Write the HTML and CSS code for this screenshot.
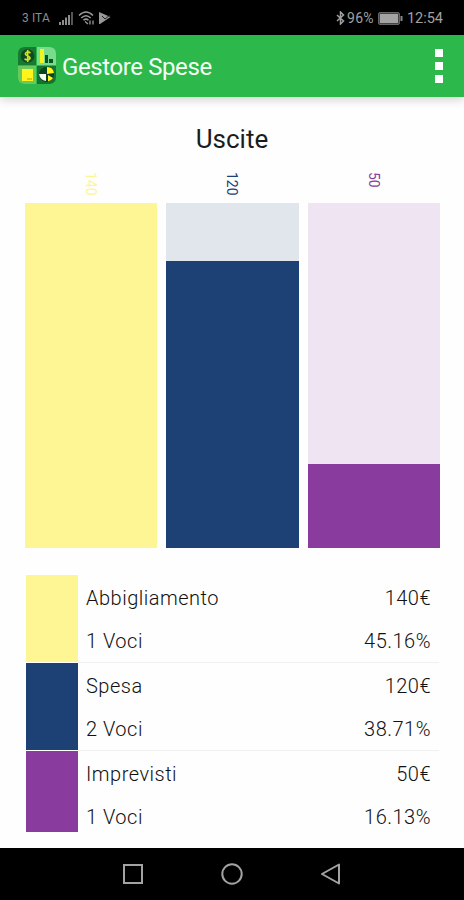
FILE: index.html
```html
<!DOCTYPE html>
<html lang="it">
<head>
    <meta charset="UTF-8">
    <title>Gestore Spese</title>
    <link rel="stylesheet" href="styles.css">
</head>
<body>
    <div class="status-bar">
        <div class="status-left">
            <span class="carrier">3 ITA</span>
            <svg class="signal" width="14" height="13" viewBox="0 0 14 13">
                <path d="M0 10h2v3H0zM3 8h2v5H3zM6 5.500h2v7.500H6zM9 3h2v10H9z" fill="#8c8c8c"/>
                <path d="M12 0h2v13h-2z" fill="#555"/>
            </svg>
            <svg class="wifi" width="17" height="14" viewBox="0 0 17 14" fill="none" stroke="#999" stroke-width="1.500">
                <path d="M1 4.500Q8 -2.500 15 4.500M3.300 7Q8 2.500 12.700 7M5.500 9.300Q8 7 10.500 9.300"/>
                <path d="M7 10.500l3 2.500M12 9.500v4M15 9.500v4" stroke-width="1.300"/>
            </svg>
            <svg class="play" width="12" height="12" viewBox="0 0 12 12">
                <path d="M0 0l11.500 5L1 12H0z" fill="#999"/>
                <path d="M3 4l3 3 5-4" fill="none" stroke="#222" stroke-width="1"/>
            </svg>
        </div>
        <div class="status-right">
            <svg class="bluetooth" width="9" height="14" viewBox="0 0 9 14" fill="none" stroke="#a0a0a0" stroke-width="1.500">
                <path d="M1 4l6.500 6L4.500 13V1l3 3L1 10"/>
            </svg>
            <span class="percent">96%</span>
            <svg class="battery" width="25" height="13" viewBox="0 0 25 13">
                <rect x=".5" y=".5" width="21" height="12" rx="1.500" fill="#444" stroke="#666"/>
                <rect x="2" y="2" width="18" height="9" fill="#a3a3a3"/>
                <path d="M22.500 4h2v5h-2z" fill="#888"/>
            </svg>
            <span class="clock">12:54</span>
        </div>
    </div>

    <div class="app-bar">
        <svg class="logo" width="38" height="38" viewBox="0 0 38 38">
            <path d="M7 0h11v18H0V7Q0 0 7 0z" fill="#167a31"/>
            <path d="M19 0h12q7 0 7 7v11H19z" fill="#78dc8c"/>
            <path d="M0 19h18v18H7q-7 0-7-7z" fill="#68c95c"/>
            <path d="M19 19h19v11q0 7-7 7H19z" fill="#14732e"/>
            <circle cx="9.500" cy="9" r="6.800" fill="#0c4a20"/>
            <path d="M12.500 6Q9 3.700 7.500 6.300C6.500 9 12.500 8.500 12 11.500Q10.500 14 6.500 12M9.700 3v12" fill="none" stroke="#d6df20" stroke-width="1.600"/>
            <path d="M22 2h4v14h-4z" fill="#f1f51c"/>
            <path d="M27 8h3v8h-3zM31 12h4v4h-4z" fill="#0c5426"/>
            <path d="M4 22h11v12H4z" fill="#fff51c"/>
            <path d="M9 32h5" stroke="#a4a800" stroke-width="1"/>
            <circle cx="28.500" cy="27.500" r="7.500" fill="#0a4420"/>
            <path d="M29 27V20Q35 20 36 26zM30 28l5 3q-2 3-5 3.500z" fill="#fff51c"/>
            <path d="M21 27h7v7q-6-1-7-7z" fill="#f4fff0"/>
        </svg>
        <h1>Gestore Spese</h1>
        <div class="menu">
            <span></span>
            <span></span>
            <span></span>
        </div>
    </div>

    <div class="content">
        <h2>Uscite</h2>

        <div class="chart">
            <div class="column yellow">
                <div class="value">140</div>
                <div class="track"><div class="bar" style="height: 100%"></div></div>
            </div>
            <div class="column blue">
                <div class="value">120</div>
                <div class="track"><div class="bar" style="height: 83.2%"></div></div>
            </div>
            <div class="column purple">
                <div class="value">50</div>
                <div class="track"><div class="bar" style="height: 24.3%"></div></div>
            </div>
        </div>

        <div class="legend">
            <div class="item yellow">
                <div class="swatch"></div>
                <div class="info">
                    <div class="line"><span>Abbigliamento</span><span>140€</span></div>
                    <div class="line"><span>1 Voci</span><span>45.16%</span></div>
                </div>
            </div>
            <div class="item blue">
                <div class="swatch"></div>
                <div class="info">
                    <div class="line"><span>Spesa</span><span>120€</span></div>
                    <div class="line"><span>2 Voci</span><span>38.71%</span></div>
                </div>
            </div>
            <div class="item purple">
                <div class="swatch"></div>
                <div class="info">
                    <div class="line"><span>Imprevisti</span><span>50€</span></div>
                    <div class="line"><span>1 Voci</span><span>16.13%</span></div>
                </div>
            </div>
        </div>
    </div>

    <div class="nav-bar">
        <svg width="22" height="22" viewBox="0 0 22 22"><rect x="2" y="2" width="18" height="18"/></svg>
        <svg width="22" height="22" viewBox="0 0 22 22"><circle cx="11" cy="11" r="9.700"/></svg>
        <svg width="22" height="22" viewBox="0 0 22 22"><path d="M19 1.500v19L2 11z" stroke-linejoin="round"/></svg>
    </div>
</body>
</html>
```
FILE: styles.css
```css
body {
    margin: 0;
    height: 900px;
    display: flex;
    flex-direction: column;
    overflow: hidden;
    font-family: Roboto, sans-serif;
    background-color: #fefefe;
}

.status-bar {
    height: 35px;
    box-sizing: border-box;
    padding: 1px 21px 0 22px;
    display: flex;
    justify-content: space-between;
    align-items: center;
    background-color: #000;
    color: #a0a0a0;
    font-size: 14px;
}

.status-left,
.status-right {
    display: flex;
    align-items: center;
}

.carrier {
    font-size: 12px;
    letter-spacing: 0.1px;
    color: #8c8c8c;
}

.signal {
    margin-left: 9px;
}

.wifi {
    margin-left: 5px;
}

.play {
    margin-left: 4px;
}

.percent {
    margin-left: 2px;
    letter-spacing: 0.3px;
}

.battery {
    margin: 0 4px;
}

.clock {
    font-size: 14.5px;
}

.app-bar {
    height: 62px;
    flex: none;
    box-sizing: border-box;
    padding: 0 21px 0 18px;
    display: flex;
    align-items: center;
    background-color: #2db84b;
    box-shadow: 0 2px 10px rgba(0, 0, 0, 0.2);
}

h1 {
    flex: 1;
    margin: 2px 0 0 6px;
    font-size: 24px;
    font-weight: 400;
    letter-spacing: -0.4px;
    color: #f4fff4;
}

.menu {
    display: flex;
    flex-direction: column;
    gap: 5px;
}

.menu span {
    width: 8px;
    height: 8px;
    background-color: #fff;
}

.content {
    flex: 1;
}

h2 {
    margin: 26px 0 0;
    font-size: 26px;
    line-height: 32px;
    font-weight: 400;
    text-align: center;
    color: #1c1c1c;
}

.yellow {
    --color: #fef594;
    --light: #fffde8;
}

.blue {
    --color: #1d4174;
    --light: #e1e5ec;
}

.purple {
    --color: #893c9d;
    --light: #efe4f1;
}

.chart {
    margin: 17px 24px 0 25px;
    display: grid;
    grid-template-columns: repeat(3, 1fr);
    gap: 9px;
}

.column {
    display: flex;
    flex-direction: column;
    align-items: center;
}

.value {
    height: 31px;
    writing-mode: vertical-rl;
    font-size: 14px;
    line-height: 16px;
    color: var(--color);
}

.track {
    width: 100%;
    height: 345px;
    display: flex;
    align-items: flex-end;
    background-color: var(--light);
}

.bar {
    width: 100%;
    background-color: var(--color);
}

.legend {
    margin: 27px 25px 0 26px;
}

.item {
    display: flex;
    height: 87px;
    margin-bottom: 1px;
}

.item:last-child {
    height: 81px;
}

.swatch {
    width: 52px;
    background-color: var(--color);
}

.info {
    flex: 1;
    height: 88px;
    padding: 2px 8px 0;
    box-sizing: border-box;
    border-bottom: 1px solid #f0f0f0;
}

.item:last-child .info {
    border-bottom: none;
}

.line {
    height: 43px;
    line-height: 43px;
    display: flex;
    justify-content: space-between;
    font-size: 20px;
    font-weight: 300;
    letter-spacing: 0.5px;
    color: #111;
}

.nav-bar {
    height: 52px;
    flex: none;
    display: flex;
    justify-content: center;
    align-items: center;
    gap: 77px;
    background-color: #000;
}

.nav-bar svg {
    fill: none;
    stroke: #a3a3a3;
    stroke-width: 2;
}
```
